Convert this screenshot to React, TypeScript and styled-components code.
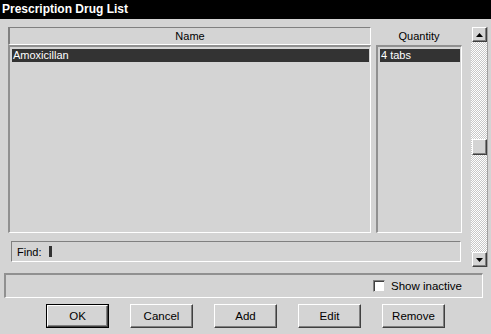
import { FC } from 'react';
import styled, { createGlobalStyle } from 'styled-components';

const GlobalStyle = createGlobalStyle`
  html, body {
    margin: 0;
    padding: 0;
    background: #d4d4d4;
  }
  body {
    font-family: 'Liberation Sans', Arial, sans-serif;
    font-size: 11px;
    color: #000;
  }
`;

const BUTTONS = ['OK', 'Cancel', 'Add', 'Edit', 'Remove'];

const App: FC = () => (
  <>
    <GlobalStyle />
    <WindowStyled>
      <TitleBarStyled>Prescription Drug List</TitleBarStyled>

      <MainRowStyled>
        <LeftPaneStyled>
          <ColumnsStyled>
            <HeaderStyled boxed>Name</HeaderStyled>
            <HeaderStyled>Quantity</HeaderStyled>
            <ListStyled>
              <RowStyled selected>Amoxicillan</RowStyled>
            </ListStyled>
            <ListStyled>
              <RowStyled selected>4 tabs</RowStyled>
            </ListStyled>
          </ColumnsStyled>

          <FindStyled>
            Find:
            <CaretStyled />
          </FindStyled>
        </LeftPaneStyled>

        <ScrollbarStyled>
          <ScrollButtonStyled>
            <svg width="7" height="4" viewBox="0 0 7 4">
              <path d="M3.5 0 L7 4 L0 4 Z" fill="#000" />
            </svg>
          </ScrollButtonStyled>
          <TrackStyled>
            <ThumbStyled />
          </TrackStyled>
          <ScrollButtonStyled>
            <svg width="7" height="4" viewBox="0 0 7 4">
              <path d="M0 0 L7 0 L3.5 4 Z" fill="#000" />
            </svg>
          </ScrollButtonStyled>
        </ScrollbarStyled>
      </MainRowStyled>

      <StatusBarStyled>
        <CheckboxStyled />
        <span>Show inactive</span>
      </StatusBarStyled>

      <ButtonRowStyled>
        {BUTTONS.map((label) => (
          <ButtonStyled key={label} isDefault={label === 'OK'}>
            {label}
          </ButtonStyled>
        ))}
      </ButtonRowStyled>
    </WindowStyled>
  </>
);

const WindowStyled = styled.div`
  width: 491px;
  height: 334px;
  box-sizing: border-box;
  background: #d4d4d4;
  display: flex;
  flex-direction: column;
  overflow: hidden;
`;

const TitleBarStyled = styled.div`
  height: 19px;
  background: #000;
  color: #fff;
  font-weight: bold;
  font-size: 12px;
  line-height: 19px;
  padding-left: 2px;
  flex-shrink: 0;
`;

const MainRowStyled = styled.div`
  display: flex;
  align-items: flex-start;
  margin-top: 8px;
  padding-left: 8px;
  gap: 9px;
`;

const LeftPaneStyled = styled.div`
  display: flex;
  flex-direction: column;
  width: 454px;
`;

const ColumnsStyled = styled.div`
  display: grid;
  grid-template-columns: 363px 86px;
  grid-template-rows: 18px 188px;
  column-gap: 5px;
`;

const HeaderStyled = styled.div<{ boxed?: boolean }>`
  box-sizing: border-box;
  display: flex;
  align-items: center;
  justify-content: center;
  height: 18px;
  ${({ boxed }) =>
    boxed &&
    `
    border-top: 1px solid #808080;
    border-left: 2px solid #808080;
    border-bottom: 1px solid #fff;
    border-right: 1px solid #fff;
  `}
`;

const ListStyled = styled.div`
  box-sizing: border-box;
  border-top: 2px solid #909090;
  border-left: 2px solid #909090;
  border-bottom: 1px solid #fff;
  border-right: 1px solid #fff;
  padding: 2px 1px 0 2px;
`;

const RowStyled = styled.div<{ selected?: boolean }>`
  height: 13px;
  line-height: 13px;
  padding-left: 1px;
  white-space: nowrap;
  background: ${({ selected }) => (selected ? '#333' : 'transparent')};
  color: ${({ selected }) => (selected ? '#fff' : '#000')};
`;

const FindStyled = styled.div`
  box-sizing: border-box;
  margin: 8px 0 0 3px;
  width: 450px;
  height: 21px;
  border-top: 1px solid #808080;
  border-left: 1px solid #808080;
  border-bottom: 1px solid #fff;
  border-right: 1px solid #fff;
  display: flex;
  align-items: center;
  padding-left: 5px;
  gap: 8px;
`;

const CaretStyled = styled.span`
  display: inline-block;
  width: 3px;
  height: 11px;
  background: #333;
`;

const ScrollbarStyled = styled.div`
  display: flex;
  flex-direction: column;
  width: 16px;
  height: 240px;
  border-right: 1px solid #a0a0a0;
`;

const bevel = `
  box-sizing: border-box;
  background: #d4d4d4;
  border-top: 1px solid #fff;
  border-left: 1px solid #fff;
  border-bottom: 1px solid #404040;
  border-right: 1px solid #404040;
  box-shadow: inset -1px -1px 0 #808080;
`;

const ScrollButtonStyled = styled.div`
  ${bevel};
  width: 15px;
  height: 15px;
  margin-left: 1px;
  display: flex;
  align-items: center;
  justify-content: center;
  flex-shrink: 0;
`;

const TrackStyled = styled.div`
  flex: 1;
  background: repeating-conic-gradient(#fff 0 25%, #c8c8c8 0 50%) 0 0 / 2px 2px;
  padding-top: 97px;
`;

const ThumbStyled = styled.div`
  ${bevel};
  width: 15px;
  height: 16px;
  margin-left: 1px;
`;

const StatusBarStyled = styled.div`
  box-sizing: border-box;
  margin: 6px 0 0 4px;
  width: 479px;
  height: 25px;
  border-top: 2px solid #909090;
  border-left: 2px solid #909090;
  border-bottom: 1px solid #fff;
  border-right: 1px solid #fff;
  display: flex;
  align-items: center;
  justify-content: flex-end;
  padding-right: 20px;
  gap: 6px;
  font-size: 11.5px;
`;

const CheckboxStyled = styled.span`
  box-sizing: border-box;
  width: 12px;
  height: 12px;
  background: #fff;
  border-top: 1px solid #808080;
  border-left: 1px solid #808080;
  border-bottom: 1px solid #d4d4d4;
  border-right: 1px solid #d4d4d4;
  box-shadow: inset 1px 1px 0 #404040;
`;

const ButtonRowStyled = styled.div`
  display: flex;
  gap: 21px;
  margin-top: 6px;
  padding-left: 46px;
`;

const ButtonStyled = styled.div<{ isDefault?: boolean }>`
  ${bevel};
  width: 63px;
  height: 24px;
  display: flex;
  align-items: center;
  justify-content: center;
  font-size: 11.5px;
  ${({ isDefault }) =>
    isDefault &&
    `
    outline: 1px solid #000;
    outline-offset: -1px;
    border-top: 2px solid #fff;
    border-left: 2px solid #fff;
    border-bottom: 2px solid #404040;
    border-right: 2px solid #404040;
  `}
`;

export default App;
